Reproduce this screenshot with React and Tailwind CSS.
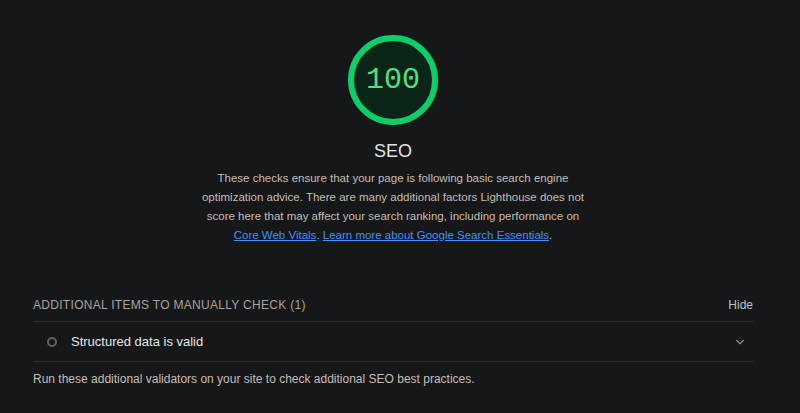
import { ChevronDown } from 'lucide-react';

const Gauge = ({ score }) => {
  const r = 42;
  return (
    <div className="relative w-[92px] h-[92px]">
      <svg width="92" height="92" viewBox="0 0 92 92">
        <circle cx="46" cy="46" r={r} fill="#0b2518" stroke="#0cce6b" strokeWidth="6" />
      </svg>
      <div className="absolute inset-0 flex items-center justify-center text-[30px] text-[#4fe080] font-['Liberation_Mono','DejaVu_Sans_Mono',monospace]">
        {score}
      </div>
    </div>
  );
};

const App = () => {
  return (
    <div className="w-[800px] h-[413px] bg-[#151719] overflow-hidden font-['Liberation_Sans',Arial,sans-serif]">
      <div className="w-[720px] ml-[33px] flex flex-col">
        <div className="flex flex-col items-center pt-[34px]">
          <Gauge score={100} />
          <div className="mt-[14px] text-[18px] leading-[22px] text-[#e4e4e4]">SEO</div>
          <p className="mt-[7px] w-[392px] text-center text-[11.5px] leading-[19px] text-[#c4bdb4]">
            These checks ensure that your page is following basic search engine optimization advice. There are many additional factors Lighthouse does not score here that may affect your search ranking, including performance on{' '}
            <a className="text-[#3f93f7] underline">Core Web Vitals</a>.{' '}
            <a className="text-[#3f93f7] underline">Learn more about Google Search Essentials</a>.
          </p>
        </div>

        <div className="mt-[48px]">
          <div className="flex items-center justify-between h-[24px] text-[12px] text-[#a9a39c]">
            <span className="tracking-[0.3px]">ADDITIONAL ITEMS TO MANUALLY CHECK (1)</span>
            <span className="text-[#c2c2c2]">Hide</span>
          </div>
          <div className="mt-[4px] border-t border-[#2e3033]" />
          <div className="flex items-center h-[39px] pl-[14px] pr-[6px]">
            <span className="w-[10px] h-[10px] rounded-full border-2 border-[#606265]" />
            <span className="ml-[14px] text-[13px] text-[#e6e6e6]">Structured data is valid</span>
            <ChevronDown size={14} className="ml-auto text-[#8a8c8f]" strokeWidth={2} />
          </div>
          <div className="border-t border-[#2e3033]" />
          <p className="mt-[8px] text-[12px] text-[#c4bdb4]">
            Run these additional validators on your site to check additional SEO best practices.
          </p>
        </div>
      </div>
    </div>
  );
};

export default App;
